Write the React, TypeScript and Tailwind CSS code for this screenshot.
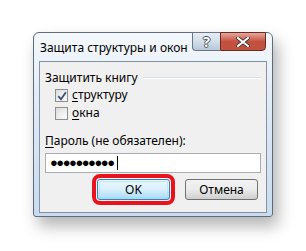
import React from 'react';

function CheckRow({ checked, label, u }: { checked: boolean; label: string; u: string }) {
  return (
    <div className="flex items-center h-[18px] pl-[15px]">
      <div className="w-[13px] h-[13px] border border-[#8e8f8f] bg-gradient-to-br from-[#dcdcdc] to-[#fbfbfb] p-[2px] flex">
        <div className="flex-1 bg-gradient-to-br from-[#e4e4e4] to-[#f9f9f9] relative">
          {checked && (
            <svg viewBox="0 0 9 9" className="absolute -left-[1px] -top-[1px] w-[10px] h-[10px]">
              <path d="M1.2 4.6 L3.6 7.4 L8 1.2" fill="none" stroke="#3b4f7a" strokeWidth="1.6" />
            </svg>
          )}
        </div>
      </div>
      <span className="ml-[4px]">
        <span className="underline underline-offset-2">{u}</span>
        {label}
      </span>
    </div>
  );
}

export default function App() {
  return (
    <div
      className="w-[306px] h-[251px] bg-white pt-[32px] pl-[33px] text-[12px] text-black"
      style={{ fontFamily: '"Noto Sans", "Open Sans", sans-serif' }}
    >
      <div className="w-[240px] h-[185px] rounded-t-[6px] rounded-b-[3px] border border-[#5f6b7a] bg-gradient-to-b from-[#f4f8fc] via-[#dbe7f4] to-[#c8dbf0] shadow-[5px_9px_16px_rgba(0,0,0,0.3)] flex flex-col">
        <div className="h-[28px] flex items-start">
          <div className="flex-1 min-w-0 whitespace-nowrap pl-[6px] pt-[7px] text-[12px] leading-[15px]">Защита структуры и окон</div>
          <div className="flex mr-[6px] -mt-[1px]">
            <div className="w-[28px] h-[19px] rounded-bl-[4px] border border-[#6a7686] border-r-0 bg-gradient-to-b from-[#e6edf5] via-[#d2dde9] to-[#b8c7d9] flex items-center justify-center text-[14px] leading-none font-bold text-white [text-shadow:1px_0_0_#4b5563,-1px_0_0_#4b5563,0_1px_0_#4b5563,0_-1px_0_#4b5563]">
              ?
            </div>
            <div className="w-[46px] h-[19px] rounded-br-[4px] border border-[#6a2a24] bg-gradient-to-b from-[#e5a79d] via-[#c4503f] to-[#c0523e] flex items-center justify-center">
              <svg viewBox="0 0 14 10" className="w-[14px] h-[10px]">
                <path d="M2 1 L12 9 M12 1 L2 9" stroke="#333" strokeWidth="3.6" strokeLinecap="square" />
                <path d="M2 1 L12 9 M12 1 L2 9" stroke="#fff" strokeWidth="2" strokeLinecap="square" />
              </svg>
            </div>
          </div>
        </div>
        <div className="mx-[5px] h-[152px] border border-[#8393a6] bg-[#f0f0f0] flex flex-col">
          <div className="flex items-center pl-[5px] pt-[8px] h-[23px]">
            <span>Защитить книгу</span>
            <div className="flex-1 ml-[5px] mr-[5px] h-[2px] border-t border-[#d5dfe5] border-b border-b-white" />
          </div>
          <div className="mt-[1px]">
            <CheckRow checked u="с" label="труктуру" />
          </div>
          <CheckRow checked={false} u="о" label="кна" />
          <div className="pl-[5px] mt-[11px] leading-[16px]">
            <span className="underline underline-offset-2">П</span>ароль (не обязателен):
          </div>
          <div className="mx-[5px] mt-[4px] h-[20px] border border-[#abadb3] bg-white flex items-center pl-[4px]">
            <span className="text-[13px] font-bold tracking-[-1.5px] leading-none relative -top-[1px]">●●●●●●●●●●</span>
            <div className="w-[1px] h-[14px] bg-black ml-[3px]" />
          </div>
          <div className="flex mt-[6px] pl-[57px]">
            <div className="rounded-[8px] border-[4px] border-[#e8131c] p-[1px] -m-[5px]">
              <div className="w-[73px] h-[21px] rounded-[3px] border border-[#3c7fb1] bg-gradient-to-b from-[#eaf6fd] via-[#d9f0fc] to-[#a7d9f5] p-[1px]">
                <div className="h-full rounded-[2px] border border-[#97e4fa]/60 flex items-center justify-center">OK</div>
              </div>
            </div>
            <div className="ml-[15px] w-[73px] h-[21px] rounded-[3px] border border-[#707070] bg-gradient-to-b from-[#f2f2f2] via-[#ebebeb] to-[#cfcfcf] flex items-center justify-center">
              Отмена
            </div>
          </div>
        </div>
      </div>
    </div>
  );
}
